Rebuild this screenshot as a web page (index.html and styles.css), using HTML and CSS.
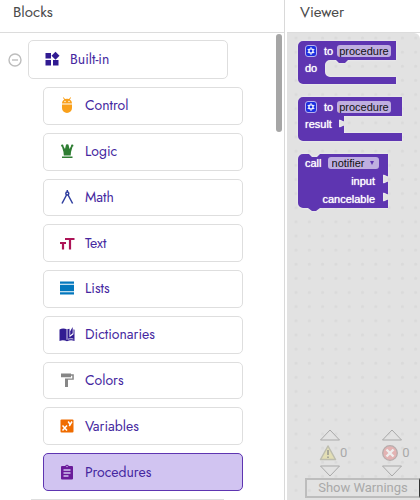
FILE: index.html
```html
<!DOCTYPE html>
<html lang="en">
<head>
<meta charset="utf-8">
<title>Blocks editor</title>
<link rel="stylesheet" href="styles.css">
</head>
<body>
<main class="editor">
  <section class="palette">
    <h2 class="heading">Blocks</h2>
    <div class="tree">
      <div class="root">
        <button class="collapse" aria-label="Collapse Built-in">
          <svg width="14" height="14" viewBox="0 0 14 14" fill="none" stroke="#bdbdbd" stroke-width="1.4"><circle cx="7" cy="7" r="6"/><path d="M4 7h6"/></svg>
        </button>
        <button class="item">
          <svg class="icon" viewBox="0 0 16 16" fill="#311b92"><path d="M1.500 2h5.500v5.500H1.500zM1.500 9h5.500v5.500H1.500zM9 9h5.500v5.500H9zM11.500 .8l4 4-4 4-4-4z"/></svg>
          Built-in
        </button>
      </div>
      <ul class="drawers">
        <li><button class="item">
          <svg class="icon" viewBox="0 0 16 16"><path fill="#f9a01b" d="M3 6.600C3 4.700 4 3.200 5.200 2.500L3.900.7l.6-.5 1.500 1.900a5.500 5.500 0 0 1 4 0L11.500.2l.6.5-1.300 1.800C12 3.200 13 4.700 13 6.600zM3 7.500h10V11a5 5 0 0 1-10 0z"/><g fill="#fff"><circle cx="6" cy="4.500" r=".7"/><circle cx="10" cy="4.500" r=".7"/></g></svg>
          Control</button></li>
        <li><button class="item">
          <svg class="icon" viewBox="0 0 16 16" fill="#2e7d32"><path d="M3 13.600h10.500v1.400H3zM4.800 12.600 4.500 9 3 3.800A1.200 1.200 0 1 1 4.400 3L6 6l.8-3.400a1.300 1.300 0 1 1 2.900 0L10.500 6l1.600-3a1.200 1.200 0 1 1 1.400.8L12 9l-.3 3.600z"/></svg>
          Logic</button></li>
        <li><button class="item">
          <svg class="icon" viewBox="0 0 16 16" fill="none" stroke="#303f9f" stroke-width="1.500"><circle cx="8.300" cy="4.500" r="1.500"/><path d="M8.300 1v2M7.500 6 3 14.500M9.100 6l4.500 8.500"/></svg>
          Math</button></li>
        <li><button class="item">
          <svg class="icon" viewBox="0 0 16 16" fill="none" stroke="#ad1457" stroke-width="2.200"><path d="M6 4h9.500M11 4v10.500M1 8h6M4 8v6.500"/></svg>
          Text</button></li>
        <li><button class="item">
          <svg class="icon" viewBox="0 0 16 16" fill="#0277bd"><path d="M1 1.500h14v2.200H1zM1 4.700h14v6.600H1zM1 12.300h14v2.200H1z"/></svg>
          Lists</button></li>
        <li><button class="item">
          <svg class="icon" viewBox="0 0 16 16"><path fill="#311b92" d="M.5 3.500C3 2.300 5.500 2.300 8 3.500c1-.5 1.700-.7 2.500-.8v8.500l4-3V3.200l1 .5V15c-2.500-1.200-5-1-7.500.3C5.500 14 3 13.800.5 15z"/><path stroke="#fff" stroke-width=".8" d="M8 3.500v10.300"/><path fill="#311b92" d="M11.200 5.200 13.700 1v6.300l-2.500 2z"/><path fill="none" stroke="#fff" stroke-width=".8" d="M9 13.200c2-.6 3.600-.7 5.300-.2"/></svg>
          Dictionaries</button></li>
        <li><button class="item">
          <svg class="icon" viewBox="0 0 16 16" fill="#868686"><path d="M2 1.500h10v.8h2.800v5.500H9V15H6V6.500h7.300V3.700H12V5.200H2z"/></svg>
          Colors</button></li>
        <li><button class="item">
          <svg class="icon" viewBox="0 0 16 16"><rect x="1.500" y="1.500" width="13" height="13" rx="1" fill="#ef6c00"/><path fill="none" stroke="#fff" stroke-width="1.500" d="m3.500 7.500 4.500 5M8 7.500l-4.500 5M9.200 3.500l1.900 2.900M13 3.500 10.300 8"/></svg>
          Variables</button></li>
        <li><button class="item selected">
          <svg class="icon" viewBox="0 0 16 16"><path fill="#6a1b9a" d="M3 2h3.200a2 2 0 0 1 3.600 0H13a1 1 0 0 1 1 1v11.500a1 1 0 0 1-1 1H3a1 1 0 0 1-1-1V3a1 1 0 0 1 1-1z"/><path stroke="#d1c4f1" stroke-width="1.300" d="M4.500 6h7M4.500 9h7M4.500 12h5"/><circle cx="8" cy="2.500" r=".7" fill="#d1c4f1"/></svg>
          Procedures</button></li>
      </ul>
      <div class="next"></div>
      <div class="thumb"></div>
    </div>
  </section>

  <section class="viewer">
    <h2 class="heading">Viewer</h2>
    <div class="canvas">
      <div class="block procedure-do">
        <svg class="shape" width="98" height="44" viewBox="0 0 98 44"><path d="M5 0H98V19H50l-3 3h-6l-3-3h-6a5 5 0 0 0-5 5v7a5 5 0 0 0 5 5H98V43H5a5 5 0 0 1-5-5V5a5 5 0 0 1 5-5z"/></svg>
        <div class="line">
          <button class="gear" aria-label="Block options"><svg width="12" height="12" viewBox="0 0 12 12"><circle cx="6" cy="6" r="2.500" fill="none" stroke="#fff" stroke-width="1.500"/><path stroke="#fff" stroke-width="1.500" d="M6 1.500v1.300M6 9.200v1.300M2.100 3.800l1.200.7M8.700 7.500l1.200.7M2.100 8.200l1.200-.7M8.700 4.500l1.200-.7"/></svg></button>
          <label class="to" for="name-do">to</label>
          <input class="field" id="name-do" value="procedure">
        </div>
        <div class="line">do</div>
      </div>
      <div class="block procedure-result">
        <svg class="shape" width="104" height="45" viewBox="0 0 104 45"><path d="M5 0H104V19H46v5c-1 1-3-2-5-1v7c2 1 4-2 5-1v7H104V44H5a5 5 0 0 1-5-5V5a5 5 0 0 1 5-5z"/></svg>
        <div class="line">
          <button class="gear" aria-label="Block options"><svg width="12" height="12" viewBox="0 0 12 12"><circle cx="6" cy="6" r="2.500" fill="none" stroke="#fff" stroke-width="1.500"/><path stroke="#fff" stroke-width="1.500" d="M6 1.500v1.300M6 9.200v1.300M2.100 3.800l1.200.7M8.700 7.500l1.200.7M2.100 8.200l1.200-.7M8.700 4.500l1.200-.7"/></svg></button>
          <label class="to" for="name-result">to</label>
          <input class="field" id="name-result" value="procedure">
        </div>
        <div class="line">result</div>
      </div>
      <div class="block call">
        <svg class="shape" width="91" height="57" viewBox="0 0 91 57"><path d="M5 0h6l3 3h5l3-3H90V22c-1 1-3-2-5-1v8c2 1 4-2 5-1V40c-1 1-3-2-5-1v8c2 1 4-2 5-1v8H22l-4 3h-4l-4-3H5a5 5 0 0 1-5-5V5a5 5 0 0 1 5-5z"/></svg>
        <div class="line">
          <label for="callee">call</label>
          <span class="pick"><select class="field" id="callee"><option>notifier</option></select></span>
        </div>
        <div class="line arg">input</div>
        <div class="line arg">cancelable</div>
      </div>

      <div class="warnings">
        <div class="counters">
          <div class="counter">
            <button aria-label="Previous warning"><svg width="22" height="12" viewBox="0 0 22 12"><path class="arrow" d="M1.500 11 11 1l9.500 10z"/></svg></button>
            <span class="count"><svg width="18" height="18" viewBox="0 0 18 18"><path fill="#e2deb5" stroke="#bdbdaf" stroke-linejoin="round" stroke-width="1.500" d="M9 2l7.500 13.500h-15z"/><path stroke="#9c9c93" stroke-width="1.600" d="M9 6v5M9 12.500v1.500"/></svg>0</span>
            <button aria-label="Next warning"><svg width="22" height="12" viewBox="0 0 22 12"><path class="arrow" d="M1.500 1 11 11l9.500-10z"/></svg></button>
          </div>
          <div class="counter">
            <button aria-label="Previous error"><svg width="22" height="12" viewBox="0 0 22 12"><path class="arrow" d="M1.500 11 11 1l9.500 10z"/></svg></button>
            <span class="count"><svg width="18" height="18" viewBox="0 0 18 18"><circle cx="9" cy="9" r="7.300" fill="#e3b3b3" stroke="#b7adad" stroke-width="1.300"/><path stroke="#eee" stroke-width="2.400" d="m5.500 5.500 7 7M12.500 5.500l-7 7"/></svg>0</span>
            <button aria-label="Next error"><svg width="22" height="12" viewBox="0 0 22 12"><path class="arrow" d="M1.500 1 11 11l9.500-10z"/></svg></button>
          </div>
        </div>
        <button class="show">Show Warnings</button>
      </div>
    </div>
  </section>
</main>
</body>
</html>
```
FILE: styles.css
```css
* {
  box-sizing: border-box;
}

body {
  margin: 0;
  background: #fff;
  font-family: Jost, Lato, sans-serif;
}

button {
  padding: 0;
  border: 0;
  background: none;
  font: inherit;
  color: inherit;
}

svg {
  display: block;
}

.editor {
  display: grid;
  grid-template-columns: 285fr 133fr;
  gap: 2px;
  height: 100vh;
  overflow: hidden;
}

.palette,
.viewer {
  display: flex;
  flex-direction: column;
  min-width: 0;
  min-height: 0;
}

.palette {
  border-right: 1px solid #d9d9d9;
}

.heading {
  flex: none;
  margin: 0;
  padding: 0 13px 7px;
  border-bottom: 1px solid #dcdcdc;
  font-size: 15px;
  line-height: 25px;
  font-weight: 400;
  color: #4a4a4a;
}

.tree {
  position: relative;
  flex: 1;
  min-height: 0;
  display: flex;
  flex-direction: column;
  gap: 8px;
  padding-top: 7px;
}

.root {
  display: flex;
  align-items: center;
  gap: 6px;
  padding: 0 56px 0 8px;
}

.collapse {
  flex: none;
}

.item {
  display: flex;
  align-items: center;
  gap: 10px;
  width: 100%;
  height: 100%;
  min-height: 36px;
  padding: 0 15px 1px;
  border: 1px solid #dedede;
  border-radius: 5px;
  font-size: 14px;
  line-height: 18px;
  color: #4527a0;
}

.root .item {
  height: 39px;
}

.selected {
  border-color: #5e35b1;
  background: #d1c4f1;
}

.icon {
  flex: none;
  width: 16px;
  height: 16px;
}

.drawers {
  flex: 1;
  display: grid;
  grid-auto-rows: 1fr;
  gap: 8px;
  margin: 0;
  padding: 0 41px 0 43px;
  list-style: none;
}

.next {
  flex: none;
  height: 1px;
  margin: 0 60px 0 31px;
  background: #dedede;
}

.thumb {
  position: absolute;
  top: 1px;
  right: 2px;
  width: 6px;
  height: 98px;
  border-radius: 3px;
  background: #a6a6a6;
}

.canvas {
  position: relative;
  flex: 1;
  border-top-right-radius: 6px;
  background: #e2e2e2 radial-gradient(circle at 9px 5px, #dadada 1px, transparent 2px) 0 0 / 14px 14px round;
  font-family: "Liberation Sans", sans-serif;
  font-size: 11px;
}

.block {
  position: absolute;
  left: 11px;
  padding: 3px 5px 0 7px;
  color: #fff;
}

.procedure-do {
  top: 8px;
}

.procedure-result {
  top: 64px;
}

.call {
  top: 121px;
  width: 90px;
  padding-top: 0;
}

.shape {
  position: absolute;
  top: 0;
  left: 0;
  fill: #5e35b1;
  filter: drop-shadow(0 0 1px #f4f0fa);
}

.line {
  position: relative;
  display: flex;
  align-items: center;
  height: 18px;
  text-shadow: 0 0 1px #fff;
}

.procedure-do .line:first-of-type,
.procedure-result .line:first-of-type {
  height: 13px;
}

.procedure-do .line + .line,
.procedure-result .line + .line {
  height: 22px;
}

.call .line {
  gap: 6px;
}

.call .arg {
  justify-content: flex-end;
  padding-right: 8px;
}

.gear {
  padding: 0;
  border: 1px solid #b9b2f0;
  border-radius: 3px;
  background: #1c2fe0;
}

.gear svg {
  width: 10px;
  height: 10px;
}

.to {
  margin: 0 4px 0 7px;
}

.field {
  width: 54px;
  height: 12px;
  padding: 0 2px;
  border: 0;
  border-radius: 3px;
  background: #bfaee0;
  color: #111;
  font: 11px/12px "Liberation Sans", sans-serif;
  appearance: none;
}

.pick {
  position: relative;
  display: flex;
}

.pick .field {
  width: 51px;
  padding: 0 4px;
}

.pick::after {
  content: "";
  position: absolute;
  top: 4px;
  right: 5px;
  border: 2px solid transparent;
  border-top: 4px solid #5e35b1;
}

.warnings {
  position: absolute;
  right: 0;
  bottom: 2px;
  left: 18px;
  font-family: Roboto, sans-serif;
  font-size: 13px;
  color: #a9a9a9;
}

.counters {
  display: flex;
  gap: 34px;
  padding: 0 0 1px 14px;
}

.counter {
  display: grid;
  justify-items: start;
  row-gap: 3px;
}

.count {
  display: flex;
  align-items: center;
  gap: 3px;
  line-height: 18px;
}

.arrow {
  fill: none;
  stroke: #a9a9a9;
}

.show {
  width: 100%;
  height: 20px;
  border: 2px solid #bdbdbd;
  border-right: 1px solid #333;
  line-height: 16px;
}
```
